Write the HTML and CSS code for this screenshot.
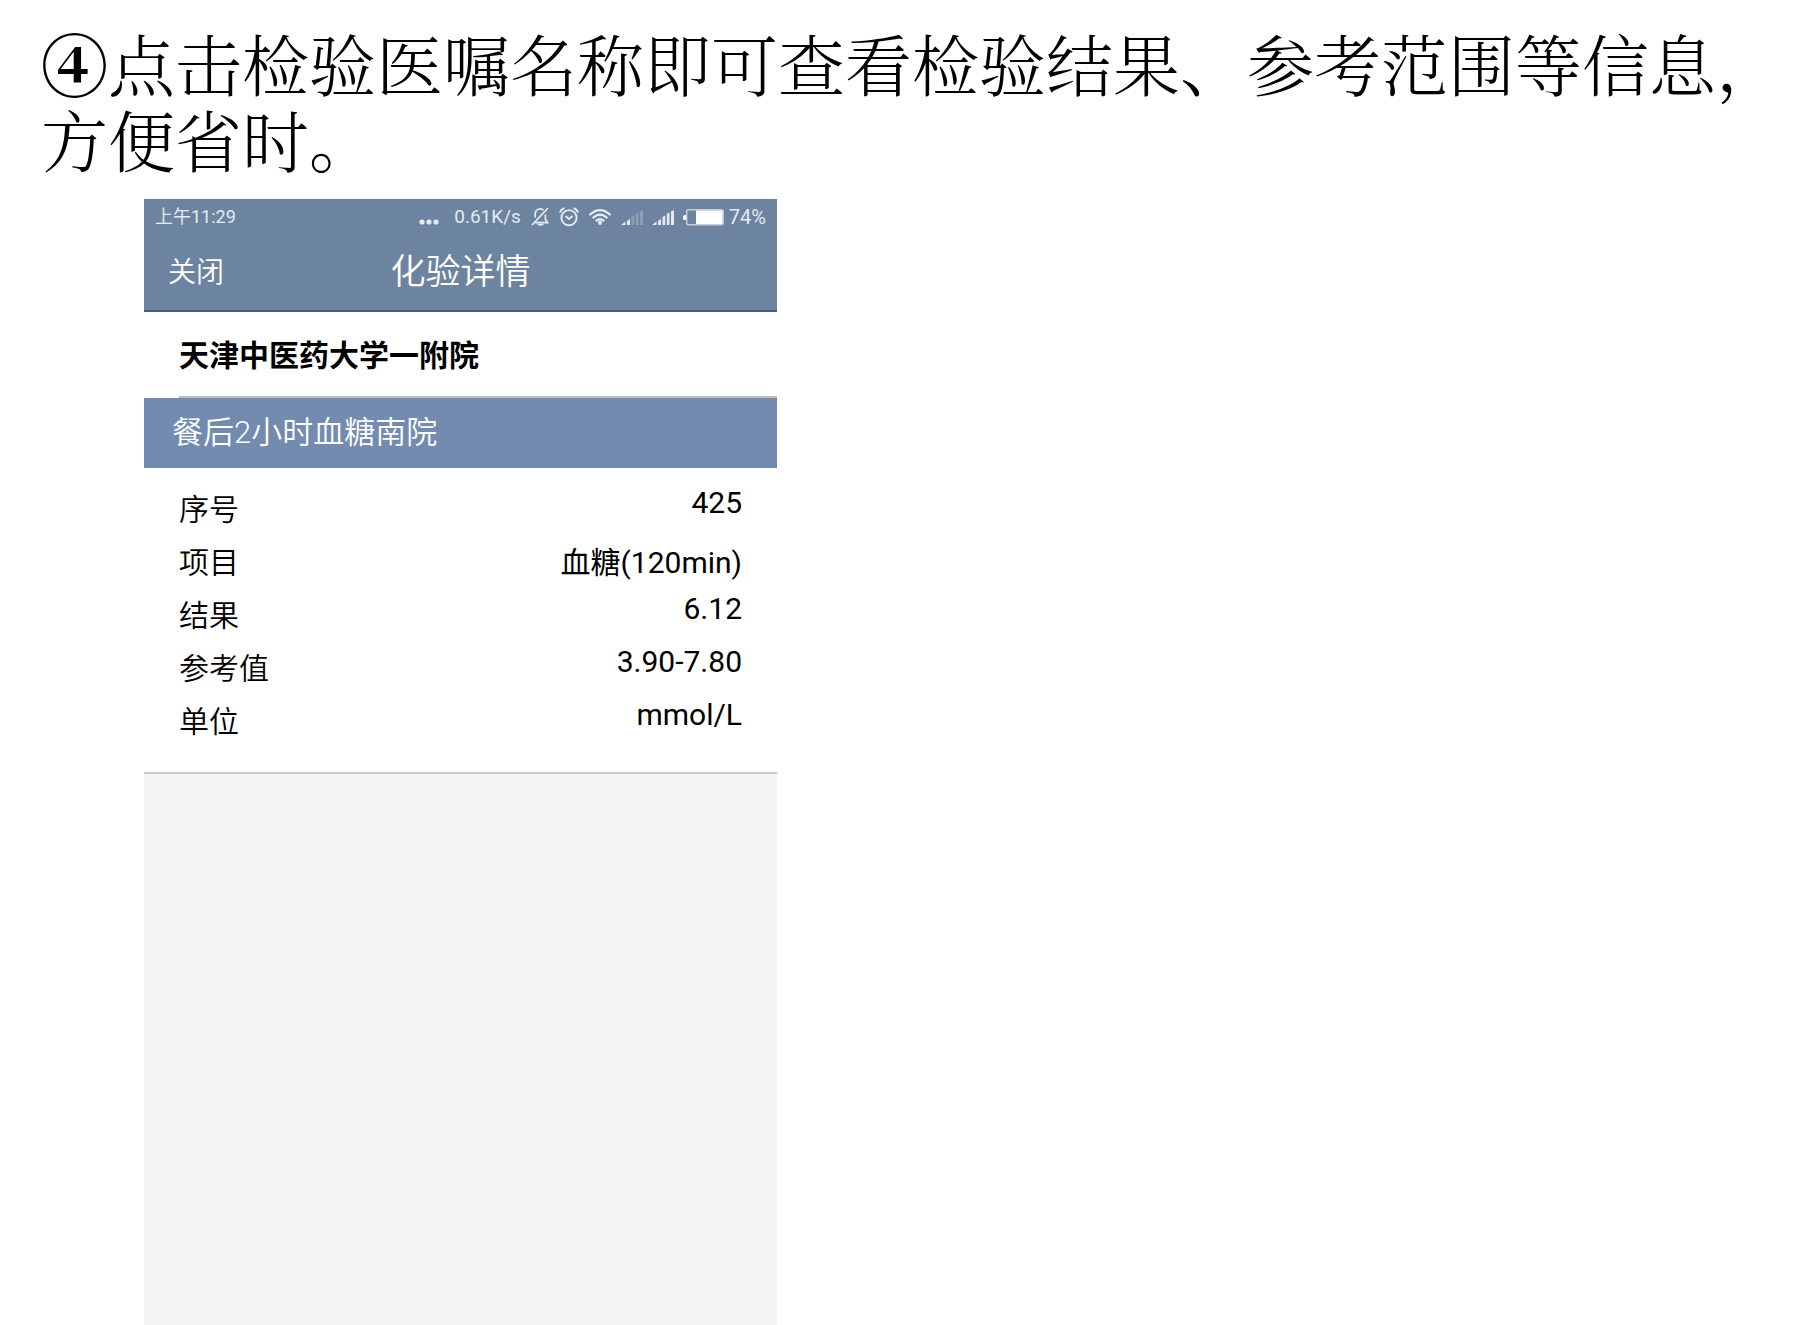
FILE: index.html
```html
<!DOCTYPE html>
<html lang="zh-CN">
<head>
<meta charset="utf-8">
<meta name="viewport" content="width=device-width, initial-scale=1">
<title>化验详情</title>
<link rel="stylesheet" href="styles.css">
</head>
<body>
<h1 class="caption">④点击检验医嘱名称即可查看检验结果、参考范围等信息，方便省时。</h1>
<main class="phone">
  <header class="appbar">
    <div class="status">
      <span class="time">上午11:29</span>
      <svg class="dots" width="20" height="20" viewBox="0 0 20 20" fill="currentColor"><circle cx="3" cy="15" r="2.6"/><circle cx="10" cy="15" r="2.6"/><circle cx="17" cy="15" r="2.6"/></svg>
      <span class="speed">0.61K/s</span>
      <svg width="20" height="20" viewBox="-1 0 20 20" fill="none" stroke="currentColor" stroke-width="1.7"><path d="M12.500 3.200C11.600 2.300 10.500 1.800 9.300 1.800C6 1.800 4.200 4 4.200 7V10.500M4 15.700H16.700L14.400 12.500V7.500"/><path d="M17 1L1 18"/><path d="M6.500 17.200Q9.500 19.600 12.500 17.200Z" fill="currentColor" stroke-width="1"/></svg>
      <svg width="20" height="20" viewBox="0 0 20 20" fill="none" stroke="currentColor" stroke-width="1.9"><circle cx="10" cy="10.700" r="7.600"/><path d="M6.500 9L10 12L13.500 9M1 5.500Q2 2.300 5.500 1.200M19 5.500Q18 2.300 14.500 1.200"/></svg>
      <svg width="24" height="20" viewBox="0 0 24 20" fill="none" stroke="currentColor" stroke-width="2.200"><path d="M1.500 8Q12-1.800 22.500 8M4.600 11.300Q12 4 19.400 11.300M7.800 14.300Q12 10.200 16.200 14.300"/><circle cx="12" cy="16" r="2" fill="currentColor" stroke="none"/></svg>
      <svg width="22" height="20" viewBox="0 0 22 20" fill="currentColor"><path d="M0 18L4.500 14.500V18ZM6 14L9 12V18H6Z"/><path opacity=".28" d="M10.500 10L13.200 8.500V18H10.500ZM14.800 7L17.500 5.500V18H14.800ZM19 4.500L22 3V18H19Z"/></svg>
      <svg width="22" height="20" viewBox="0 0 22 20" fill="currentColor"><path d="M0 18L4.500 14.500V18ZM6 14L9 12V18H6ZM10.500 10L13.200 8.500V18H10.500ZM14.800 7L17.500 5.500V18H14.800ZM19 4.500L22 3V18H19Z"/></svg>
      <svg width="41" height="20" viewBox="0 0 41 20"><path d="M3 8H1.500Q0 8 0 9.500V11.500Q0 13 1.500 13H3Z" fill="#fff"/><rect x="3.700" y="2.700" width="36.500" height="15" rx="2" fill="none" stroke="#c5cfdb" stroke-width="1.500"/><rect x="13" y="3.500" width="26.500" height="13.500" fill="#fff"/></svg>
      <span class="percent">74%</span>
    </div>
    <div class="nav">
      <button class="close" type="button">关闭</button>
      <h2 class="title">化验详情</h2>
    </div>
  </header>
  <section class="report">
    <h3 class="hospital">天津中医药大学一附院</h3>
    <h4 class="test">餐后2小时血糖南院</h4>
    <table class="results">
      <tbody>
        <tr><th scope="row">序号</th><td>425</td></tr>
        <tr><th scope="row">项目</th><td>血糖(120min)</td></tr>
        <tr><th scope="row">结果</th><td>6.12</td></tr>
        <tr><th scope="row">参考值</th><td>3.90-7.80</td></tr>
        <tr><th scope="row">单位</th><td>mmol/L</td></tr>
      </tbody>
    </table>
  </section>
</main>
</body>
</html>
```
FILE: styles.css
```css
* { box-sizing: border-box; }

body {
  margin: 0;
  min-height: 100vh;
  display: flex;
  flex-direction: column;
  background: #fff;
  color: #000;
  font-family: Roboto, "Noto Sans CJK SC", sans-serif;
}

h1, h2, h3, h4 { margin: 0; font-weight: 400; }

.caption {
  padding: 24px 24px 23px 41px;
  font-family: SimSun, "Noto Serif CJK SC", "Noto Sans CJK SC", serif;
  font-size: 67px;
  font-weight: 300;
  line-height: 76px;
}

.caption::first-letter { font-weight: 900; }

.phone {
  flex: 1;
  width: 100%;
  max-width: 777px;
  padding-left: 144px;
  background: #f5f5f5 content-box;
}

.appbar {
  background: #6d84a0;
  border-bottom: 2px solid #465d7c;
  color: #fff;
}

.status {
  display: flex;
  align-items: center;
  gap: 9px;
  height: 36px;
  padding: 0 11px;
  color: #e4eaf1;
  font-size: 20px;
  line-height: 36px;
}

.time { margin-right: auto; font-size: 18px; }
.speed { font-size: 19px; }
.dots { margin-right: 6px; }
.percent { margin-left: -4px; }

.nav {
  display: grid;
  grid-template-columns: 1fr auto 1fr;
  align-items: center;
  height: 75px;
  padding: 0 24px;
}

.close {
  justify-self: start;
  padding: 0;
  border: 0;
  background: none;
  color: inherit;
  font: inherit;
  font-size: 28px;
  font-weight: 350;
  line-height: 40px;
}

.title {
  font-size: 35px;
  font-weight: 350;
  line-height: 48px;
}

.report {
  background: #fff;
  border-bottom: 2px solid #c8c7cc;
}

.hospital {
  margin-left: 35px;
  padding: 21px 0 18px;
  border-bottom: 2px solid #bfbfc2;
  font-size: 30px;
  font-weight: 700;
  line-height: 45px;
}

.test {
  padding: 12px 28px;
  background: #728bae;
  color: #fff;
  font-size: 31px;
  font-weight: 350;
  line-height: 46px;
}

.results {
  width: 100%;
  padding: 17px 35px 22px;
  border-spacing: 0;
  font-size: 30px;
}

.results th,
.results td {
  height: 53px;
  padding: 0;
  text-align: left;
  vertical-align: top;
}

.results th { font-weight: 350; }
.results td { text-align: right; }
```
